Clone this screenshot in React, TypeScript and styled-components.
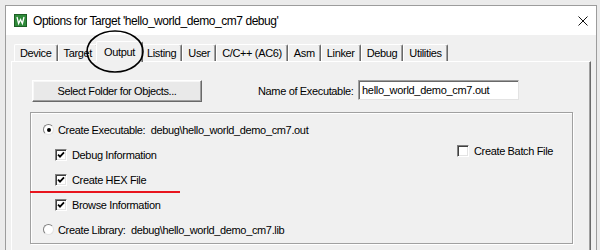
import React from 'react';
import styled, { createGlobalStyle } from 'styled-components';

const GlobalStyle = createGlobalStyle`
  html, body {
    margin: 0;
    padding: 0;
    background: #ebebeb;
  }
  body {
    font-family: 'Liberation Sans', Arial, sans-serif;
    font-size: 11px;
    color: #000;
  }
`;

const Screen = styled.div`
  width: 600px;
  height: 250px;
  box-sizing: border-box;
  padding: 5px 3px 0 5px;
  overflow: hidden;
`;

const Window = styled.div`
  position: relative;
  height: 100%;
  box-sizing: border-box;
  border: 1px solid #9c9c9c;
  border-bottom: none;
  background: #f0f0f0;
  display: flex;
  flex-direction: column;
`;

const TitleBar = styled.div`
  height: 29px;
  flex: none;
  background: #fff;
  display: flex;
  align-items: center;
  padding: 0 8px 0 8px;
`;

const TitleText = styled.span`
  margin-left: 6px;
  font-size: 12px;
  letter-spacing: -0.45px;
  color: #000;
  flex: 1;
`;

const Body = styled.div`
  flex: 1;
  display: flex;
  flex-direction: column;
  padding: 0 5px;
`;

const TabStrip = styled.div`
  height: 26px;
  flex: none;
  display: flex;
  align-items: flex-end;
  padding-left: 3px;
  position: relative;
  z-index: 1;
`;

const Tab = styled.div<{ $active?: boolean }>`
  box-sizing: border-box;
  height: ${(p) => (p.$active ? '21px' : '17px')};
  margin: ${(p) => (p.$active ? '0 -2px -1px -2px' : '0')};
  padding: 0 ${(p) => (p.$active ? '7px' : '5px')};
  display: flex;
  align-items: center;
  letter-spacing: -0.35px;
  background: #f0f0f0;
  border-top: 1px solid #fff;
  border-left: 1px solid #fff;
  border-right: 1px solid #696969;
  border-radius: 2px 2px 0 0;
  box-shadow: inset -1px 0 0 #a0a0a0;
  position: relative;
  z-index: ${(p) => (p.$active ? 2 : 1)};
`;

const Panel = styled.div`
  flex: 1;
  border-top: 1px solid #fff;
  border-left: 1px solid #fff;
  border-right: 1px solid #696969;
  box-shadow: inset -1px 0 0 #a0a0a0;
  padding: 18px 0 0 20px;
`;

const TopRow = styled.div`
  display: flex;
  align-items: center;
  height: 22px;
`;

const PushButton = styled.div`
  box-sizing: border-box;
  width: 170px;
  height: 22px;
  display: flex;
  align-items: center;
  justify-content: center;
  letter-spacing: -0.4px;
  background: #e9e9e9;
  border: 1px solid;
  border-color: #fff #696969 #696969 #fff;
  box-shadow: inset -1px -1px 0 #a0a0a0, inset 1px 1px 0 #f7f7f7;
`;

const NameLabel = styled.span`
  width: 100px;
  margin-left: 56px;
  letter-spacing: -0.35px;
  white-space: nowrap;
`;

const TextInput = styled.div`
  box-sizing: border-box;
  width: 161px;
  height: 20px;
  align-self: flex-start;
  background: #fff;
  border: 1px solid;
  border-color: #a0a0a0 #e3e3e3 #e3e3e3 #a0a0a0;
  box-shadow: inset 1px 1px 0 #696969;
  padding: 3px 0 0 3px;
  letter-spacing: -0.3px;
  white-space: nowrap;
`;

const GroupBox = styled.div`
  position: relative;
  box-sizing: border-box;
  width: 543px;
  height: 132px;
  margin: 10px 0 0 -2px;
  padding: 4px 0 0 12px;
  border: 1px solid #a0a0a0;
  box-shadow: inset 1px 1px 0 #fff, 1px 1px 0 #fff;
`;

const OptionRow = styled.div<{ $indent?: boolean }>`
  height: 25px;
  display: flex;
  align-items: center;
  padding-left: ${(p) => (p.$indent ? '12px' : '0')};
`;

const SplitRow = styled(OptionRow)`
  display: grid;
  grid-template-columns: 402px auto;
  align-items: center;
`;

const Item = styled.div<{ $lift?: number }>`
  display: flex;
  align-items: center;
  margin-bottom: ${(p) => (p.$lift ? `${p.$lift}px` : '0')};
`;

const OptionLabel = styled.span<{ $gap: number }>`
  margin-left: ${(p) => p.$gap}px;
  letter-spacing: -0.35px;
  white-space: pre;
`;

const RadioCircle = styled.span<{ $on?: boolean }>`
  box-sizing: border-box;
  width: 11px;
  height: 11px;
  border-radius: 50%;
  background: #fff;
  border: 1px solid;
  border-color: #808080 #e3e3e3 #e3e3e3 #808080;
  display: flex;
  align-items: center;
  justify-content: center;
  &::after {
    content: '';
    width: 4px;
    height: 4px;
    border-radius: 50%;
    background: ${(p) => (p.$on ? '#000' : 'transparent')};
  }
`;

const CheckBox = styled.span`
  box-sizing: border-box;
  width: 12px;
  height: 12px;
  background: #fff;
  border: 1px solid;
  border-color: #808080 #fff #fff #808080;
  box-shadow: inset 1px 1px 0 #404040, inset -1px -1px 0 #e3e3e3;
  display: flex;
  align-items: center;
  justify-content: center;
`;

const RedMark = styled.div`
  position: absolute;
  left: -1px;
  top: 78px;
  width: 150px;
  height: 2px;
  background: #e8151e;
`;

const Circle = styled.svg`
  position: absolute;
  left: 78px;
  top: 22px;
  z-index: 5;
  pointer-events: none;
`;

const Check: React.FC<{ checked?: boolean; label: string }> = ({ checked, label }) => (
  <Item>
    <CheckBox>
      {checked && (
        <svg width="8" height="8" viewBox="0 0 8 8">
          <polyline points="1,3.6 3,5.6 7,1.4" fill="none" stroke="#000" strokeWidth="1.8" />
        </svg>
      )}
    </CheckBox>
    <OptionLabel $gap={5}>{label}</OptionLabel>
  </Item>
);

const Radio: React.FC<{ on?: boolean; label: string }> = ({ on, label }) => (
  <Item>
    <RadioCircle $on={on} />
    <OptionLabel $gap={4}>{label}</OptionLabel>
  </Item>
);

const tabs = ['Device', 'Target', 'Output', 'Listing', 'User', 'C/C++ (AC6)', 'Asm', 'Linker', 'Debug', 'Utilities'];

const App: React.FC = () => {
  return (
    <Screen>
      <GlobalStyle />
      <Window>
        <TitleBar>
          <svg width="13" height="13" viewBox="0 0 13 13">
            <rect x="0.5" y="0.5" width="12" height="12" fill="#2f8a3a" stroke="#1c5e24" />
            <polyline points="3,3 4.6,9.5 6.5,5.5 8.4,9.5 10,3" fill="none" stroke="#fff" strokeWidth="1.3" />
          </svg>
          <TitleText>Options for Target 'hello_world_demo_cm7 debug'</TitleText>
          <svg width="10" height="10" viewBox="0 0 10 10">
            <path d="M0.5 0.5 L9.5 9.5 M9.5 0.5 L0.5 9.5" stroke="#111" strokeWidth="1" />
          </svg>
        </TitleBar>
        <Body>
          <TabStrip>
            {tabs.map((t) => (
              <Tab key={t} $active={t === 'Output'}>
                {t}
              </Tab>
            ))}
          </TabStrip>
          <Panel>
            <TopRow>
              <PushButton>Select Folder for Objects...</PushButton>
              <NameLabel>Name of Executable:</NameLabel>
              <TextInput>hello_world_demo_cm7.out</TextInput>
            </TopRow>
            <GroupBox>
              <OptionRow>
                <Radio on label={'Create Executable:  debug\\hello_world_demo_cm7.out'} />
              </OptionRow>
              <SplitRow $indent>
                <Check checked label="Debug Information" />
                <Item $lift={8}>
                  <CheckBox />
                  <OptionLabel $gap={5}>Create Batch File</OptionLabel>
                </Item>
              </SplitRow>
              <OptionRow $indent>
                <Check checked label="Create HEX File" />
              </OptionRow>
              <OptionRow $indent>
                <Check checked label="Browse Information" />
              </OptionRow>
              <OptionRow>
                <Radio label={'Create Library:  debug\\hello_world_demo_cm7.lib'} />
              </OptionRow>
              <RedMark />
            </GroupBox>
          </Panel>
        </Body>
        <Circle width="64" height="48" viewBox="0 0 64 48">
          <ellipse cx="31" cy="23.5" rx="28" ry="20.5" fill="none" stroke="#000" strokeWidth="1.6" />
        </Circle>
      </Window>
    </Screen>
  );
};

export default App;
